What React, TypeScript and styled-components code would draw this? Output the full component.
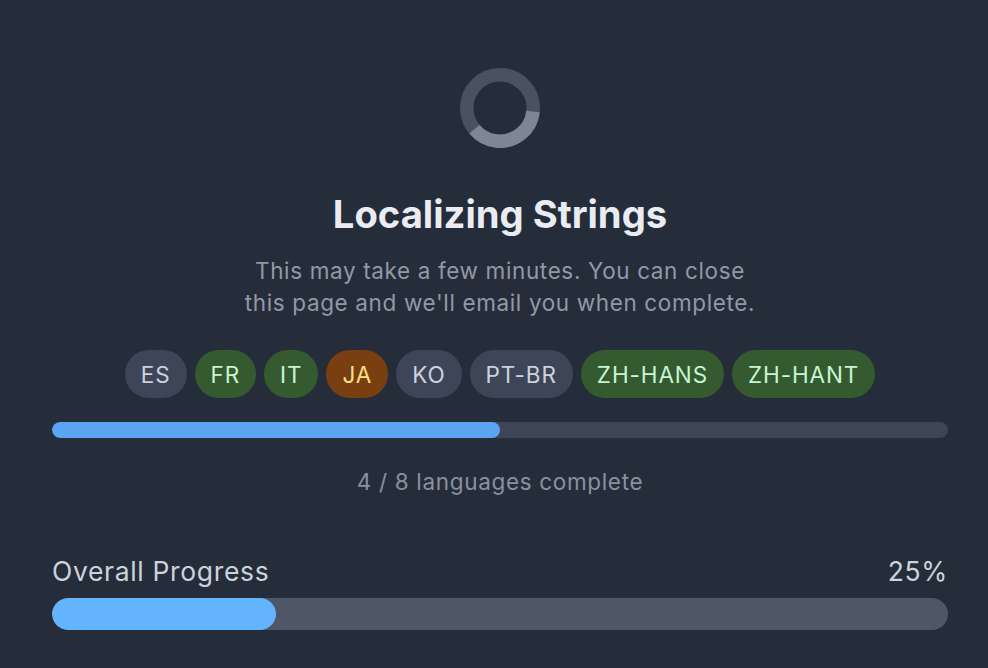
import React from 'react';
import styled, { createGlobalStyle } from 'styled-components';

const GlobalStyle = createGlobalStyle`
	html, body {
		margin: 0;
		padding: 0;
		background: #262d3a;
	}
	body {
		font-family: "Inter", "Liberation Sans", sans-serif;
	}
`;

const Page = styled.div`
	box-sizing: border-box;
	width: 988px;
	height: 668px;
	padding: 68px 40px 38px 52px;
	display: flex;
	flex-direction: column;
	align-items: center;
	background: #262d3a;
	overflow: hidden;
`;

const SpinnerSvg = styled.svg`
	display: block;
	width: 80px;
	height: 80px;
	flex: none;
`;

const Title = styled.h1`
	margin: 44px 0 0;
	font-size: 38.2px;
	line-height: 44px;
	font-weight: 700;
	color: #e9ecf3;
`;

const Subtitle = styled.p`
	margin: 19px 0 0;
	font-size: 22.5px;
	line-height: 32px;
	letter-spacing: 0.63px;
	text-align: center;
	color: #9298a8;
`;

const PillRow = styled.div`
	display: flex;
	justify-content: center;
	gap: 8px;
	margin-top: 31px;
`;

const tones = {
	idle: { bg: '#3e4556', fg: '#cbd3e0' },
	done: { bg: '#355a30', fg: '#c6f6d5' },
	active: { bg: '#7a3f10', fg: '#fbe08a' },
};

type Tone = keyof typeof tones;

const Pill = styled.span<{ $tone: Tone }>`
	height: 48px;
	padding: 0 16px;
	display: flex;
	align-items: center;
	border-radius: 24px;
	font-size: 22.5px;
	letter-spacing: 0.9px;
	background: ${({ $tone }) => tones[$tone].bg};
	color: ${({ $tone }) => tones[$tone].fg};
`;

const Track = styled.div<{ $height: number; $bg: string }>`
	width: 100%;
	height: ${({ $height }) => $height}px;
	border-radius: ${({ $height }) => $height / 2}px;
	background: ${({ $bg }) => $bg};
	overflow: hidden;
	flex: none;
`;

const Fill = styled.div<{ $bg: string }>`
	height: 100%;
	border-radius: inherit;
	background: ${({ $bg }) => $bg};
`;

const LanguageTrack = styled(Track)`
	margin-top: 24px;
`;

const Count = styled.div`
	margin-top: 28px;
	font-size: 22.5px;
	line-height: 32px;
	letter-spacing: 0.67px;
	color: #8a90a0;
`;

const OverallHeader = styled.div`
	width: 100%;
	margin-top: 57px;
	margin-bottom: 11px;
	display: flex;
	justify-content: space-between;
	font-size: 26.5px;
	line-height: 32px;
	letter-spacing: 0.66px;
	color: #ccd2de;
`;

const languages: { code: string; tone: Tone }[] = [
	{ code: 'ES', tone: 'idle' },
	{ code: 'FR', tone: 'done' },
	{ code: 'IT', tone: 'done' },
	{ code: 'JA', tone: 'active' },
	{ code: 'KO', tone: 'idle' },
	{ code: 'PT-BR', tone: 'idle' },
	{ code: 'ZH-HANS', tone: 'done' },
	{ code: 'ZH-HANT', tone: 'done' },
];

const Spinner = () => {
	const r = 33.25;
	const circ = 2 * Math.PI * r;
	return (
		<SpinnerSvg viewBox="0 0 80 80">
			<circle cx="40" cy="40" r={r} fill="none" stroke="#4a5160" strokeWidth="13.5" />
			<circle
				cx="40"
				cy="40"
				r={r}
				fill="none"
				stroke="#7e8694"
				strokeWidth="13.5"
				strokeDasharray={`${circ * (134 / 360)} ${circ}`}
				transform="rotate(6 40 40)"
			/>
		</SpinnerSvg>
	);
};

const App = () => (
	<Page>
		<GlobalStyle />
		<Spinner />
		<Title>Localizing Strings</Title>
		<Subtitle>
			This may take a few minutes. You can close
			<br />
			this page and we'll email you when complete.
		</Subtitle>
		<PillRow>
			{languages.map(({ code, tone }) => (
				<Pill key={code} $tone={tone}>{code}</Pill>
			))}
		</PillRow>
		<LanguageTrack $height={16} $bg="#3e4556">
			<Fill $bg="#5aa4f2" style={{ width: '50%' }} />
		</LanguageTrack>
		<Count>4 / 8 languages complete</Count>
		<OverallHeader>
			<span>Overall Progress</span>
			<span>25%</span>
		</OverallHeader>
		<Track $height={32} $bg="#4f5665">
			<Fill $bg="#63b3fd" style={{ width: '25%' }} />
		</Track>
	</Page>
);

export default App;
